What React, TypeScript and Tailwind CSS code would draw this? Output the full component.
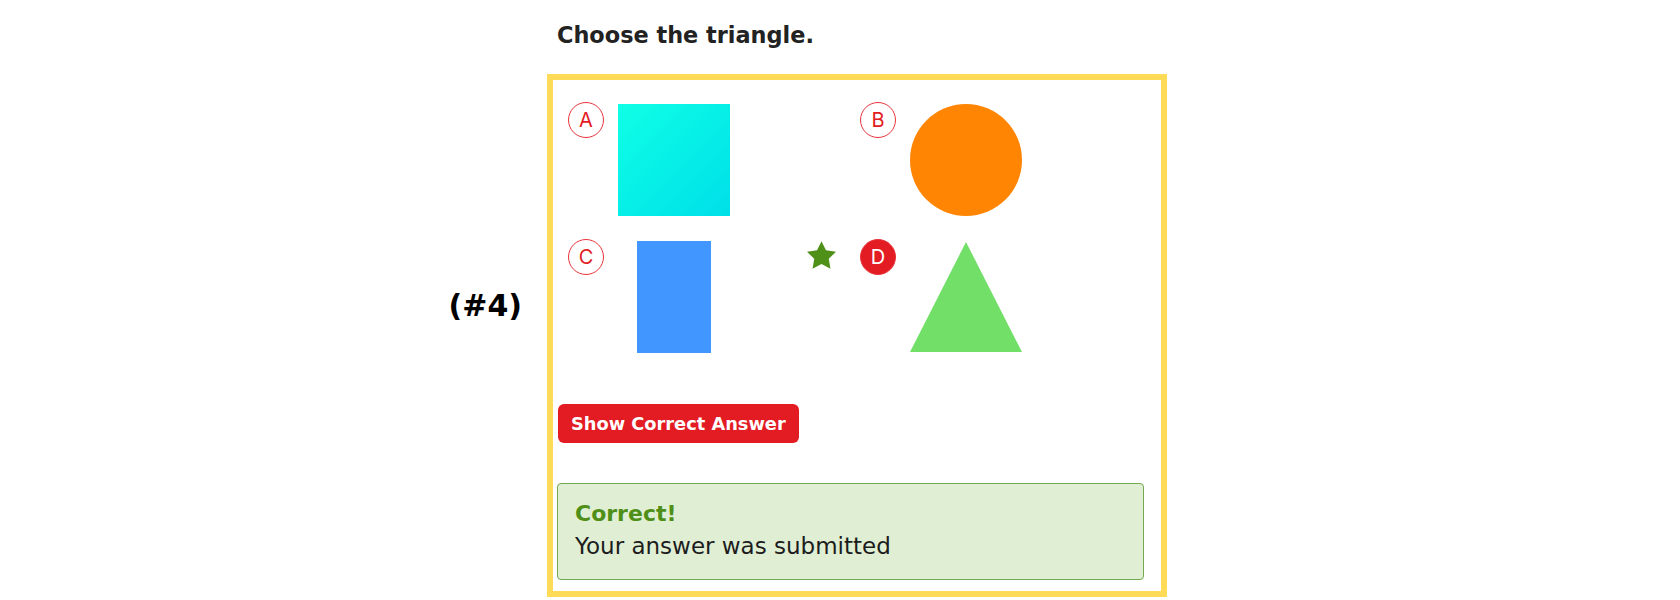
import { ReactNode } from 'react';

function Letter({ ch, picked }: { ch: string; picked?: boolean }) {
  return (
    <div
      className={`w-9 h-9 shrink-0 rounded-full border-[1.5px] border-[#e8333a] flex items-center justify-center font-['Inter',sans-serif] text-[20px] leading-none ${
        picked ? 'bg-[#e31b23] text-white' : 'bg-white text-[#e31b23]'
      }`}
    >
      {ch}
    </div>
  );
}

function Star() {
  return (
    <svg width="29" height="28" viewBox="2 2 20 19.02" className="absolute left-[-53px] top-[2px]">
      <polygon
        points="12 2 15.09 8.26 22 9.27 17 14.14 18.18 21.02 12 17.77 5.82 21.02 7 14.14 2 9.27 8.91 8.26"
        fill="#4f9018"
      />
    </svg>
  );
}

function Option({ ch, picked, marker, children }: { ch: string; picked?: boolean; marker?: boolean; children: ReactNode }) {
  return (
    <div className="relative flex items-start">
      {marker && <Star />}
      <Letter ch={ch} picked={picked} />
      <div className="ml-[14px] mt-[2px] w-[112px] h-[112px] flex justify-center">{children}</div>
    </div>
  );
}

export default function App() {
  return (
    <div className="w-[1680px] h-[600px] bg-white flex font-['DejaVu_Sans',sans-serif] text-[#222]">
      {/* question number */}
      <div className="w-[547px] shrink-0 pt-[289px] pr-[25px] text-right font-bold text-[30px] leading-[34px] text-black">
        (#4)
      </div>

      <div className="w-[620px] shrink-0">
        <div className="h-[74px] pt-[21px] pl-[10px] font-bold text-[22.4px] leading-[28px]">Choose the triangle.</div>

        <div className="h-[523px] border-[6px] border-[#ffdb58]">
          <div className="pt-[22px] pl-[15px] grid grid-cols-[292px_292px] gap-y-[23px]">
            <Option ch="A">
              <div className="w-[112px] h-[112px] bg-linear-to-br from-[#10ffe6] to-[#00dfe8]" />
            </Option>
            <Option ch="B">
              <div className="w-[112px] h-[112px] rounded-full bg-[#ff8503]" />
            </Option>
            <Option ch="C">
              <div className="w-[74px] h-[112px] bg-[#4197ff]" />
            </Option>
            <Option ch="D" picked marker>
              <svg width="112" height="112" viewBox="0 0 112 112">
                <polygon points="56,1 112,111 0,111" fill="#72df69" />
              </svg>
            </Option>
          </div>

          <button className="mt-[51px] ml-[5px] h-[39px] px-[13px] rounded-[6px] bg-[#e31b23] text-white font-bold text-[17.8px] leading-none">
            Show Correct Answer
          </button>

          <div className="mt-[40px] ml-[4px] w-[587px] h-[97px] border border-[#72a84f] rounded-[4px] bg-[#e0efd4] pt-[14px] pl-[17px] leading-[32px]">
            <div className="font-bold text-[22px] text-[#4f8f18]">Correct!</div>
            <div className="text-[23px] text-[#1c1c1c]">Your answer was submitted</div>
          </div>
        </div>
      </div>
    </div>
  );
}
